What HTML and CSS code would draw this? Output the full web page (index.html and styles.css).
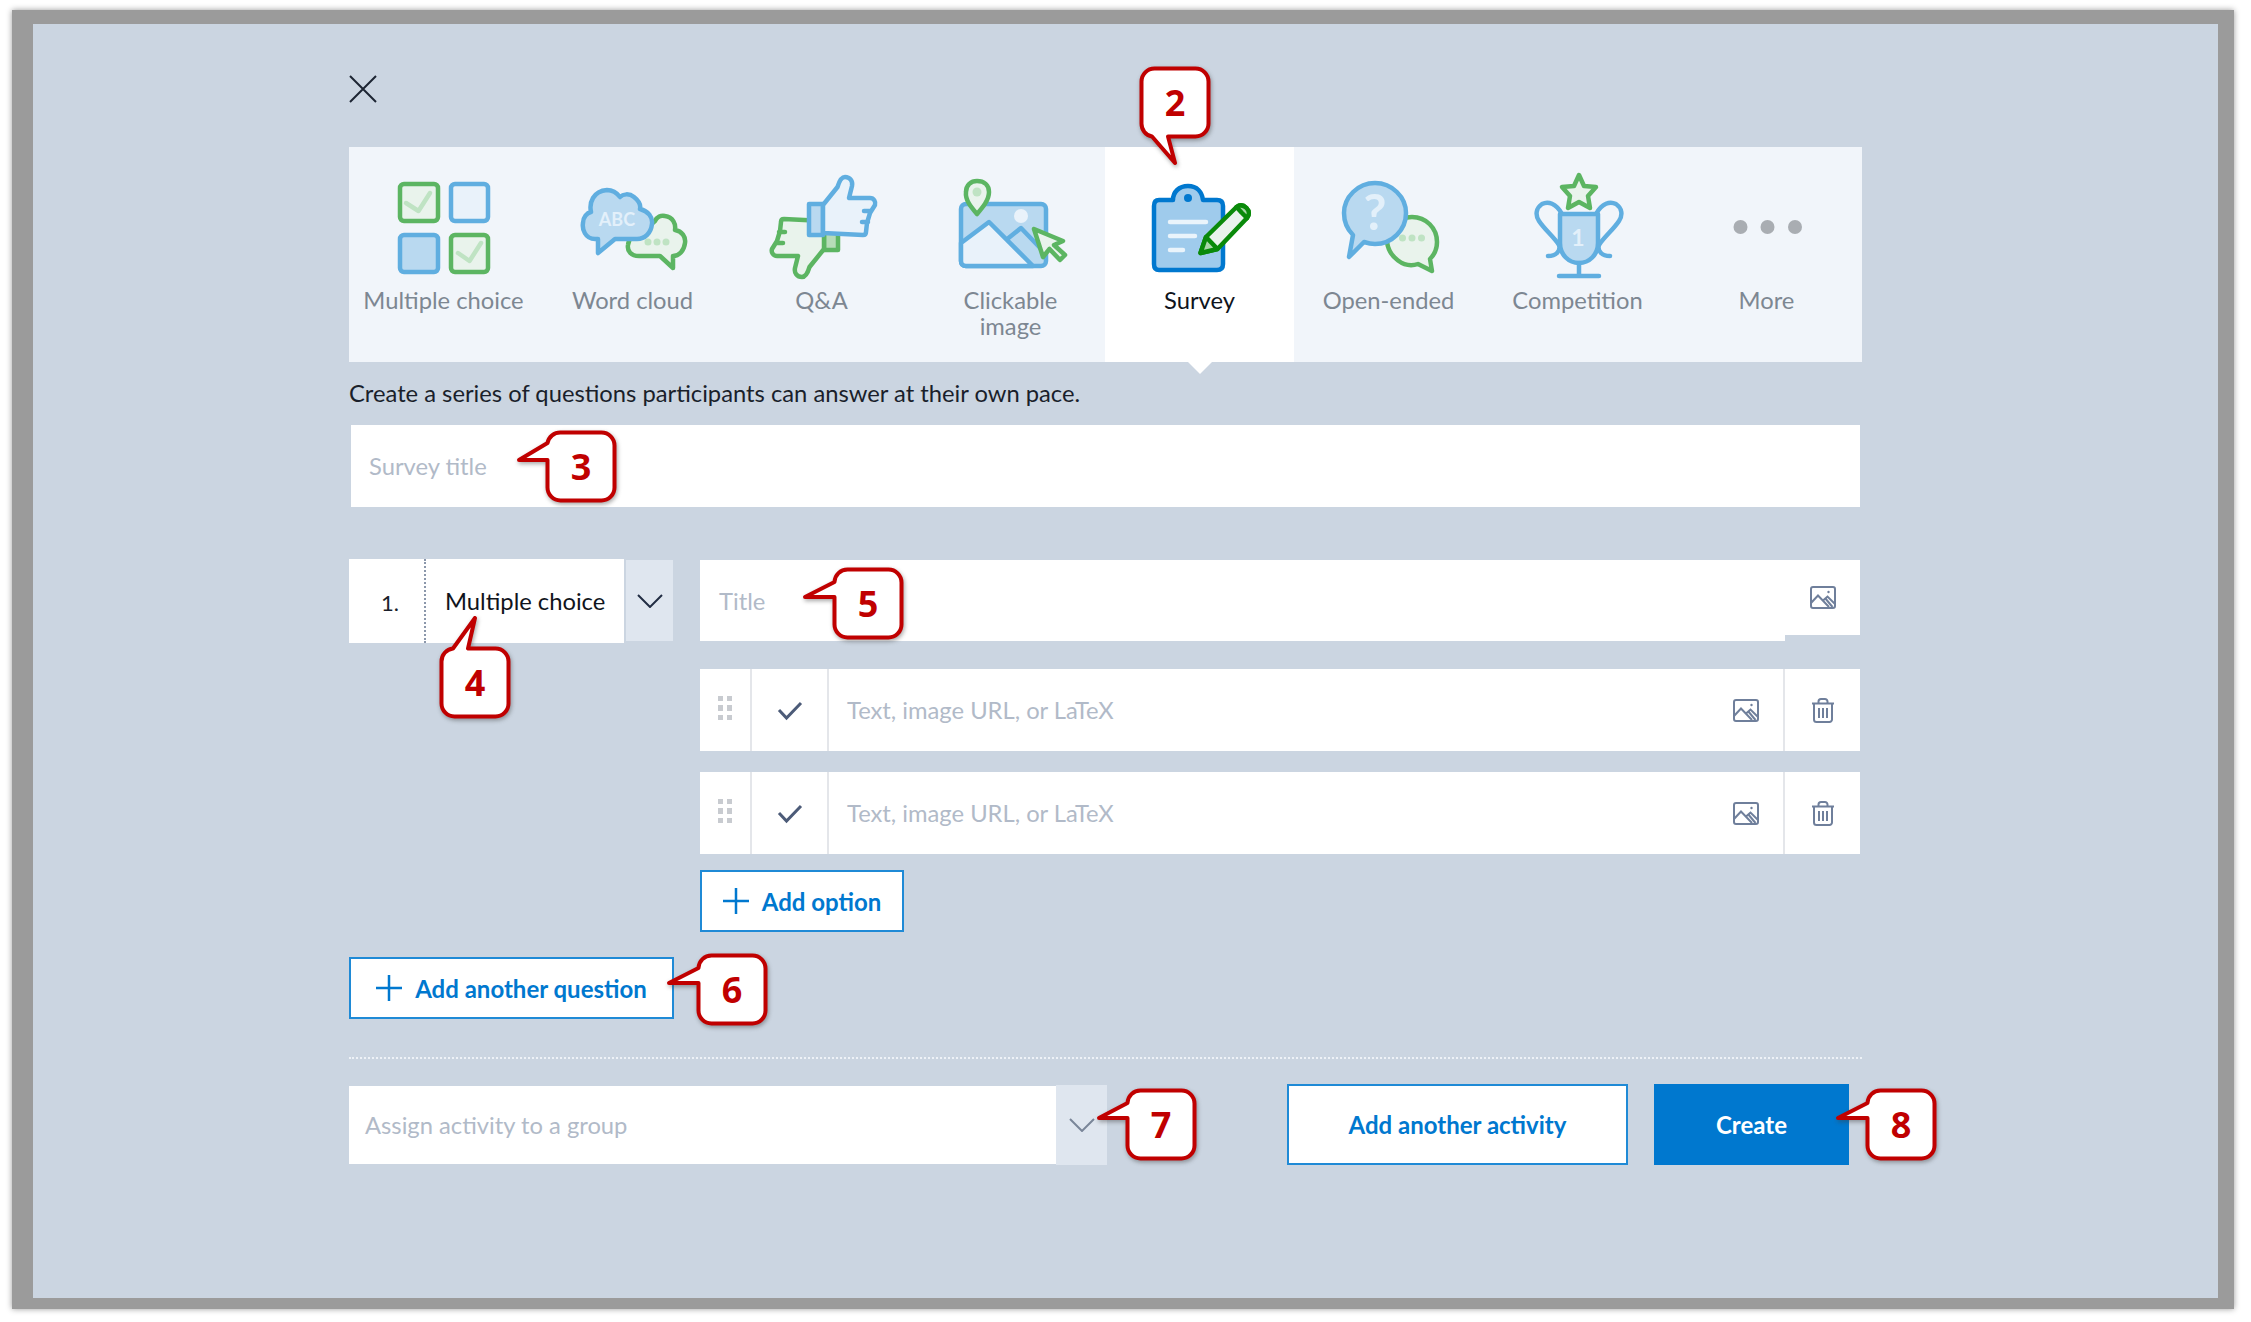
FILE: index.html
```html
<!DOCTYPE html>
<html>
<head>
  <meta charset="UTF-8">
  <title>Create survey</title>
  <link rel="stylesheet" href="styles.css">
</head>
<body>
  <svg class="defs" width="0" height="0">
    <symbol id="ico-image" viewBox="0 0 26 23">
      <rect x="1" y="1" width="24" height="21" rx="2"/>
      <path d="M1 17 L8 9.500 L19 21 M13 14.500 L17.500 10.500 L25 18 M15 12 L22.500 21"/>
      <circle cx="18.500" cy="6" r="1.200" fill="#6f7f9b" stroke="none"/>
    </symbol>
    <symbol id="ico-trash" viewBox="0 0 24 25">
      <path d="M1 5.500 H23 M7.500 5 V3.500 A2.500 2.500 0 0 1 10 1 H14 A2.500 2.500 0 0 1 16.500 3.500 V5 M3 6 V21.500 A2.500 2.500 0 0 0 5.500 24 H18.500 A2.500 2.500 0 0 0 21 21.500 V6 M8 10 V20 M12 10 V20 M16 10 V20"/>
    </symbol>
    <symbol id="ico-check" viewBox="0 0 26 20">
      <path d="M2 9 L9.500 17 L24 2"/>
    </symbol>
    <symbol id="ico-grip" viewBox="0 0 14 24">
      <rect x="0" y="0" width="5" height="5"/><rect x="9" y="0" width="5" height="5"/>
      <rect x="0" y="9" width="5" height="6"/><rect x="9" y="9" width="5" height="6"/>
      <rect x="0" y="19" width="5" height="5"/><rect x="9" y="19" width="5" height="5"/>
    </symbol>
    <symbol id="ico-plus" viewBox="0 0 26 26">
      <path d="M13 0 V26 M0 13 H26"/>
    </symbol>
    <symbol id="ico-chevron" viewBox="0 0 26 14">
      <path d="M1 1 L13 13 L25 1"/>
    </symbol>
  </svg>

  <div class="frame">
    <div class="panel">
      <div class="content">
        <svg class="close" viewBox="0 0 28 28"><path d="M1 1 L27 27 M27 1 L1 27"/></svg>

        <div class="tabs">
          <div class="tab">
            <svg class="tab-icon" viewBox="0 0 120 116">
              <rect class="g" x="16" y="17" width="38" height="37" rx="4"/>
              <rect class="b-pale" x="67" y="17" width="37" height="37" rx="4"/>
              <rect class="b" x="16" y="68" width="38" height="37" rx="4"/>
              <rect class="g" x="67" y="68" width="37" height="37" rx="4"/>
              <path class="tick" d="M22 36 L34.500 44 L46 26"/>
              <path class="tick" d="M74 86 L85.500 94 L97 76"/>
            </svg>
            <span class="tab-label">Multiple choice</span>
          </div>
          <div class="tab">
            <svg class="tab-icon" viewBox="0 0 120 116">
              <path class="g" d="M82 54 C84 50 88 48 92 49 C100 50 103 57 102 63 C109 64 113 70 112 76 C111 84 106 89 100 89 L100 101 L87 89 L66 89 C58 89 54 84 55 78 C56 70 62 66 68 66 Z"/>
              <circle class="dot" cx="75" cy="75" r="3.500"/><circle class="dot" cx="84" cy="75" r="3.500"/><circle class="dot" cx="93" cy="75" r="3.500"/>
              <path class="b" d="M22 72 C12 72 9 62 10 56 C10 50 14 46 18 45 C16 36 20 24 34 23 C40 23 44 26 47 30 C50 27 56 26 61 30 C66 34 68 38 67 42 C75 44 80 50 79 57 C78 66 72 72 64 72 L42 72 L25 86 L25 72 Z"/>
              <text class="icon-text" x="44" y="59" text-anchor="middle" font-size="18">ABC</text>
            </svg>
            <span class="tab-label">Word cloud</span>
          </div>
          <div class="tab">
            <svg class="tab-icon" viewBox="0 0 120 116">
              <g transform="translate(123 120) rotate(180)">
                <rect class="g-mid" x="47" y="37" width="14" height="31"/>
                <path class="g-pale" d="M61 38 L75.500 20 C77 15 79 10 83 10 C88 10 91 14 90 19 L87 31 L108 31 C112 31 114 35 113 38 L108 46 L105 56 L104 65 C104 67 103 68 101 68 L61 66 Z M109 44 H102 M106 55 H100"/>
              </g>
              <rect class="b" x="47" y="37" width="14" height="31"/>
              <path class="b-pale" d="M61 38 L75.500 20 C77 15 79 10 83 10 C88 10 91 14 90 19 L87 31 L108 31 C112 31 114 35 113 38 L108 46 L105 56 L104 65 C104 67 103 68 101 68 L61 66 Z M109 44 H102 M106 55 H100"/>
            </svg>
            <span class="tab-label">Q&amp;A</span>
          </div>
          <div class="tab">
            <svg class="tab-icon" viewBox="0 0 120 116">
              <rect class="b" x="10" y="37" width="85" height="62" rx="5"/>
              <circle class="sun" cx="70" cy="49" r="7"/>
              <path class="b-pale" d="M10 76 L38 55 L82 99 L15 99 Q10 99 10 94 Z"/>
              <path class="b-line" d="M57.500 71 L70 61 L94 86"/>
              <path class="g-pale" d="M26 47 C20 40 14 33 15 25 C15 18 20 14 26 14 C33 14 38 18 38 25 C38 33 32 40 26 47 Z"/>
              <circle class="dot" cx="26" cy="25" r="4.500"/>
              <path class="g-pale" d="M83 62 L112 74 L103 78 L114 88 L109 93 L98.500 82 L92 90 Z"/>
            </svg>
            <span class="tab-label">Clickable<br>image</span>
          </div>
          <div class="tab tab-active">
            <svg class="tab-icon" viewBox="0 0 120 116">
              <path class="clip" d="M19 33 H33 C33 25 39 19 48 19 C57 19 62 25 63 33 L77 33 Q83 33 83 39 V97 Q83 103 77 103 H19 Q14 103 14 97 V39 Q14 33 19 33 Z"/>
              <circle class="clip-hole" cx="48" cy="31" r="4"/>
              <path class="clip-line" d="M30 55 H66 M30 69 H55 M30 83 H43"/>
              <g transform="translate(-1.500 0)">
                <path class="pencil" d="M62 86 L67.500 70 L98 40 C102 37 105 38 108 41 C111 44 111 48 108.500 51 L79 82 Z"/>
                <path class="pencil-cap" d="M98 40 C102 37 105 38 108 41 C111 44 111 48 108.500 51 L103 45.500 Z"/>
                <path class="pencil-tip" d="M62 86 L67.500 70 L79 82 Z"/>
              </g>
            </svg>
            <span class="tab-label">Survey</span>
          </div>
          <div class="tab">
            <svg class="tab-icon" viewBox="0 0 120 116">
              <path class="g-pale" d="M83 50 C97 50 108 61 108 75 C108 82 105 88 101 92 L103 104 L89 97 C75 102 60 90 58 75 C58 61 69 50 83 50 Z"/>
              <circle class="dot" cx="73.500" cy="71" r="3.500"/><circle class="dot" cx="83" cy="71" r="3.500"/><circle class="dot" cx="92.500" cy="71" r="3.500"/>
              <path class="b" d="M46 16 C63 16 77 30 77 46 C77 63 63 77 46 77 C42 77 38 76 35 75 L20 90 L24 68 C18 62 15 54 15 46 C15 30 29 16 46 16 Z"/>
              <text class="icon-text" x="46" y="63" text-anchor="middle" font-size="50">?</text>
            </svg>
            <span class="tab-label">Open-ended</span>
          </div>
          <div class="tab">
            <svg class="tab-icon" viewBox="0 0 120 116">
              <path class="b-line" d="M44 47 C38 36 30 34 24 37 C18 41 17 48 21 54 C27 63 36 70 41 78 C43 84 38 89 30 89 M78 47 C84 36 92 34 98 37 C104 41 105 48 101 54 C95 63 86 70 81 78 C79 84 84 89 92 89"/>
              <path class="b" d="M42 47 H80 V76 C80 88 71 96 61 96 C51 96 42 88 42 76 Z"/>
              <path class="b-line" d="M61 96 V109 M41 109 H81"/>
              <text class="icon-text" x="60" y="79" text-anchor="middle" font-size="23">1</text>
              <path class="g-pale" d="M61 8 L66 19 L78 20 L70 29 L72 41 L61 35 L50 41 L52 29 L44 20 L56 19 Z"/>
            </svg>
            <span class="tab-label">Competition</span>
          </div>
          <div class="tab">
            <svg class="tab-icon" viewBox="0 0 120 116">
              <circle class="more-dot" cx="33.500" cy="60" r="7"/>
              <circle class="more-dot" cx="60.500" cy="60" r="7"/>
              <circle class="more-dot" cx="88" cy="60" r="7"/>
            </svg>
            <span class="tab-label">More</span>
          </div>
        </div>

        <p class="intro">Create a series of questions participants can answer at their own pace.</p>

        <div class="field survey-title"><span class="placeholder">Survey title</span></div>

        <div class="question">
          <div class="q-left">
            <div class="q-type">
              <span class="q-num">1.</span>
              <span class="q-name">Multiple choice</span>
            </div>
            <div class="chevron-box"><svg class="chevron"><use href="#ico-chevron"/></svg></div>
          </div>

          <div class="q-right">
            <div class="title-row">
              <div class="field title-field"><span class="placeholder">Title</span></div>
              <div class="title-image"><svg class="ico"><use href="#ico-image"/></svg></div>
            </div>

            <div class="option">
              <div class="opt-grip"><svg class="grip"><use href="#ico-grip"/></svg></div>
              <div class="opt-check"><svg class="check"><use href="#ico-check"/></svg></div>
              <div class="opt-text"><span class="placeholder">Text, image URL, or LaTeX</span><svg class="ico"><use href="#ico-image"/></svg></div>
              <div class="opt-trash"><svg class="ico"><use href="#ico-trash"/></svg></div>
            </div>
            <div class="option option-second">
              <div class="opt-grip"><svg class="grip"><use href="#ico-grip"/></svg></div>
              <div class="opt-check"><svg class="check"><use href="#ico-check"/></svg></div>
              <div class="opt-text"><span class="placeholder">Text, image URL, or LaTeX</span><svg class="ico"><use href="#ico-image"/></svg></div>
              <div class="opt-trash"><svg class="ico"><use href="#ico-trash"/></svg></div>
            </div>

            <button type="button" class="btn btn-add add-option"><svg class="plus"><use href="#ico-plus"/></svg>Add option</button>
          </div>
        </div>

        <button type="button" class="btn btn-add add-question"><svg class="plus"><use href="#ico-plus"/></svg>Add another question</button>

        <div class="divider"></div>

        <div class="footer">
          <div class="field assign"><span class="placeholder">Assign activity to a group</span></div>
          <div class="chevron-box assign-chevron"><svg class="chevron chevron-light"><use href="#ico-chevron"/></svg></div>
          <button type="button" class="btn add-activity">Add another activity</button>
          <button type="button" class="btn create">Create</button>
        </div>
      </div>

      <!-- numbered callouts sit on top of the form -->
      <div class="callout callout-2">
        <svg viewBox="0 0 70 71"><path d="M14.500 1.500 H55.500 A13 13 0 0 1 68.500 14.500 V56.500 A13 13 0 0 1 55.500 69.500 H28 L35 96 L12 69.500 A13 13 0 0 1 1.500 56.500 V14.500 A13 13 0 0 1 14.500 1.500 Z"/></svg>
        <span>2</span>
      </div>
      <div class="callout callout-3">
        <svg viewBox="0 0 70 71"><path d="M14.500 1.500 H55.500 A13 13 0 0 1 68.500 14.500 V56.500 A13 13 0 0 1 55.500 69.500 H14.500 A13 13 0 0 1 1.500 56.500 V29 L-27 29 L1.500 12 A13 13 0 0 1 14.500 1.500 Z"/></svg>
        <span>3</span>
      </div>
      <div class="callout callout-4">
        <svg viewBox="0 0 70 71"><path d="M13 1.500 L35 -29 L28 1.500 H55.500 A13 13 0 0 1 68.500 14.500 V56.500 A13 13 0 0 1 55.500 69.500 H14.500 A13 13 0 0 1 1.500 56.500 V14.500 A13 13 0 0 1 13 1.500 Z"/></svg>
        <span>4</span>
      </div>
      <div class="callout callout-5">
        <svg viewBox="0 0 70 71"><path d="M14.500 1.500 H55.500 A13 13 0 0 1 68.500 14.500 V56.500 A13 13 0 0 1 55.500 69.500 H14.500 A13 13 0 0 1 1.500 56.500 V29 L-28 29 L1.500 14 A13 13 0 0 1 14.500 1.500 Z"/></svg>
        <span>5</span>
      </div>
      <div class="callout callout-6">
        <svg viewBox="0 0 70 71"><path d="M14.500 1.500 H55.500 A13 13 0 0 1 68.500 14.500 V56.500 A13 13 0 0 1 55.500 69.500 H14.500 A13 13 0 0 1 1.500 56.500 V29 L-28 29 L1.500 14 A13 13 0 0 1 14.500 1.500 Z"/></svg>
        <span>6</span>
      </div>
      <div class="callout callout-7">
        <svg viewBox="0 0 70 71"><path d="M14.500 1.500 H55.500 A13 13 0 0 1 68.500 14.500 V56.500 A13 13 0 0 1 55.500 69.500 H14.500 A13 13 0 0 1 1.500 56.500 V29 L-27 29 L1.500 14 A13 13 0 0 1 14.500 1.500 Z"/></svg>
        <span>7</span>
      </div>
      <div class="callout callout-8">
        <svg viewBox="0 0 70 71"><path d="M14.500 1.500 H55.500 A13 13 0 0 1 68.500 14.500 V56.500 A13 13 0 0 1 55.500 69.500 H14.500 A13 13 0 0 1 1.500 56.500 V29 L-28 29 L1.500 14 A13 13 0 0 1 14.500 1.500 Z"/></svg>
        <span>8</span>
      </div>
    </div>
  </div>
</body>
</html>
```

FILE: styles.css
```css
* {
  box-sizing: border-box;
}
body {
  margin: 0;
  background-color: #fff;
  font-family: Lato, "Noto Sans", sans-serif;
  font-size: 23.750px;
  color: #1a1f2b;
}
.defs {
  position: absolute;
}
svg {
  display: block;
}

/* grey screenshot frame */
.frame {
  margin: 10px 17px 13px 12px;
  height: 1299px;
  border-style: solid;
  border-color: #9b9b9b;
  border-width: 14px 16px 11px 21px;
  box-shadow: 0 0 6px #9b9b9b;
  background-color: #cbd5e1;
}
.panel {
  position: relative;
  height: 100%;
  padding: 51px 0 0 316px;
}
.content {
  width: 1513px;
}
.close {
  width: 28px;
  height: 28px;
  margin-bottom: 44px;
}
.close path {
  fill: none;
  stroke: #1d2533;
  stroke-width: 2;
}

/* activity tabs */
.tabs {
  display: flex;
  height: 215px;
  background-color: #f1f5fa;
}
.tab {
  position: relative;
  width: 189px;
  padding-top: 20px;
  text-align: center;
  color: #7d8792;
}
.tab-active {
  background-color: #fff;
  color: #10141c;
}
.tab-active::after {
  content: "";
  position: absolute;
  left: 83px;
  bottom: -12px;
  border-top: 12px solid #fff;
  border-left: 12px solid transparent;
  border-right: 12px solid transparent;
}
.tab-icon {
  width: 120px;
  height: 116px;
  margin: 0 auto 4px;
}
.tab-label {
  display: block;
  line-height: 26px;
}
.tab-icon * {
  stroke-width: 4.500;
  stroke-linejoin: round;
  stroke-linecap: round;
}
.g { fill: #e9f3ec; stroke: #5cb562; }
.g-pale { fill: #e9f3ec; stroke: #5cb562; }
.g-mid { fill: #b6dcb8; stroke: #5cb562; }
.b { fill: #b9d9f0; stroke: #60aee0; }
.b-pale { fill: #e9f2fa; stroke: #60aee0; }
.b-line { fill: none; stroke: #60aee0; }
.tick { fill: none; stroke: #bfe3c3; }
.dot { fill: #bfe3c3; stroke: none; }
.sun { fill: #e9f2fa; stroke: none; }
.more-dot { fill: #a9adb2; stroke: none; }
.tab-icon .icon-text {
  fill: #e3f0fa;
  stroke: none;
  font-weight: 700;
}
.clip { fill: #9fcbec; stroke: #0078cf; }
.clip-hole { fill: #0078cf; stroke: none; }
.clip-line { fill: none; stroke: #eaf4fb; }
.pencil { fill: #e9f3ec; stroke: #0a8a0a; }
.pencil-cap { fill: #a9d6a9; stroke: #0a8a0a; }
.pencil-tip { fill: #a9d6a9; stroke: #0a8a0a; }

.intro {
  margin: 16px 0 0;
  line-height: 30px;
  color: #1a1f2b;
}

/* form fields */
.field {
  display: flex;
  align-items: center;
  background-color: #fff;
}
.placeholder {
  color: #b1bac8;
}
.survey-title {
  width: 1509px;
  height: 82px;
  margin: 17px 0 0 2px;
  padding-left: 18px;
}
.question {
  display: flex;
  margin-top: 52px;
}
.q-left {
  display: flex;
  width: 324px;
  height: 84px;
  margin-right: 27px;
}
.q-type {
  display: flex;
  align-items: center;
  width: 275px;
  height: 84px;
  background-color: #fff;
}
.q-num {
  width: 77px;
  height: 100%;
  line-height: 88px;
  padding-left: 32px;
  border-right: 2px dotted #8b97ab;
  font-size: 22px;
}
.q-name {
  padding-left: 19px;
  color: #10141c;
}
.chevron-box {
  display: flex;
  align-items: center;
  justify-content: center;
  width: 47px;
  height: 81px;
  margin: 1px 0 0 2px;
  background-color: #dfe6ef;
}
.chevron {
  width: 26px;
  height: 14px;
  fill: none;
  stroke: #222d44;
  stroke-width: 2;
}
.chevron-light {
  stroke: #7a8699;
}
.q-right {
  width: 1160px;
  padding-top: 1px;
}
.title-row {
  display: flex;
  align-items: flex-start;
}
.title-field {
  width: 1085px;
  height: 81px;
  padding-left: 19px;
}
.title-image {
  display: flex;
  align-items: center;
  justify-content: center;
  width: 75px;
  height: 75px;
  background-color: #fff;
}
.ico {
  width: 26px;
  height: 25px;
  fill: none;
  stroke: #6f7f9b;
  stroke-width: 2;
}
.option {
  display: flex;
  height: 82px;
  margin-top: 28px;
  background-color: #fff;
}
.option-second {
  margin-top: 21px;
}
.opt-grip, .opt-check, .opt-trash {
  display: flex;
  align-items: center;
  justify-content: center;
}
.opt-grip {
  width: 52px;
  padding-bottom: 4px;
  border-right: 2px solid #e4e6ea;
}
.grip {
  width: 14px;
  height: 24px;
  fill: #c8cbd0;
}
.opt-check {
  width: 77px;
  padding-top: 2px;
  border-right: 2px solid #e4e6ea;
}
.check {
  width: 26px;
  height: 20px;
  fill: none;
  stroke: #4c5b78;
  stroke-width: 3;
}
.opt-text {
  display: flex;
  flex: 1;
  align-items: center;
  justify-content: space-between;
  padding: 0 24px 0 18px;
  border-right: 2px solid #e4e6ea;
}
.opt-trash {
  width: 75px;
}

/* buttons */
.btn {
  display: flex;
  align-items: center;
  justify-content: center;
  padding: 0;
  font-family: inherit;
  font-size: 24px;
  font-weight: 700;
  color: #0078cf;
  background-color: #fff;
  border: 2px solid #1f8ad6;
}
.btn-add {
  height: 62px;
}
.plus {
  width: 26px;
  height: 26px;
  margin-right: 13px;
  fill: none;
  stroke: #0078cf;
  stroke-width: 2.500;
}
.add-option {
  width: 204px;
  margin-top: 16px;
}
.add-question {
  width: 325px;
  margin-top: 25px;
}
.divider {
  margin-top: 38px;
  border-top: 2px dotted #eef2f7;
}
.footer {
  display: flex;
  align-items: center;
  margin-top: 25px;
}
.assign {
  width: 707px;
  height: 78px;
  padding-left: 16px;
}
.assign-chevron {
  width: 51px;
  height: 80px;
  margin: 0;
}
.add-activity {
  width: 341px;
  height: 81px;
  margin-left: 180px;
}
.create {
  width: 195px;
  height: 81px;
  margin-left: 26px;
  color: #fff;
  background-color: #0078cf;
  border-color: #0078cf;
}

/* callouts */
.callout {
  position: absolute;
  display: flex;
  align-items: center;
  justify-content: center;
  width: 70px;
  height: 71px;
  font-family: "Noto Sans", sans-serif;
  font-size: 36px;
  font-weight: 700;
  color: #c00000;
}
.callout svg {
  position: absolute;
  left: 0;
  top: 0;
  width: 70px;
  height: 71px;
  overflow: visible;
  filter: drop-shadow(1px 2px 2px rgba(60, 60, 60, 0.45));
}
.callout path {
  fill: #fff;
  stroke: #c00000;
  stroke-width: 4;
  stroke-linejoin: round;
}
.callout span {
  position: relative;
}
.callout-2 { left: 1107px; top: 43px; }
.callout-3 { left: 513px; top: 407px; }
.callout-4 { left: 407px; top: 623px; }
.callout-5 { left: 800px; top: 544px; }
.callout-6 { left: 664px; top: 930px; }
.callout-7 { left: 1093px; top: 1065px; }
.callout-8 { left: 1833px; top: 1065px; }
```
